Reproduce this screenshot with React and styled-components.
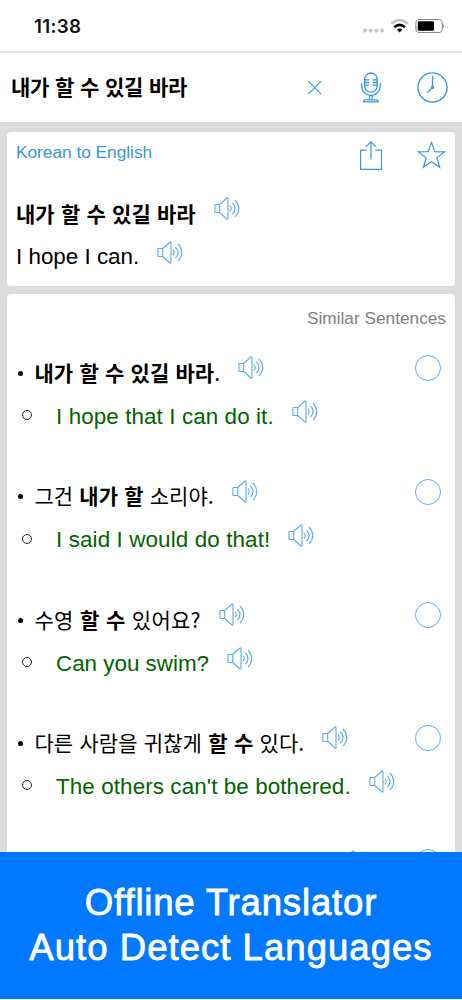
import React, { Component } from 'react';
import styled, { createGlobalStyle, ThemeProvider } from 'styled-components';

const theme = {
    accent: '#3498db',
    light: '#5dade2',
    green: '#006400',
    grey: '#dcdcdc',
    banner: '#0078ff',
};

const GlobalStyle = createGlobalStyle`
    * {
        box-sizing: border-box;
    }

    body {
        margin: 0;
        background: #fff;
        font-family: "Liberation Sans", "Noto Sans CJK KR", sans-serif;
    }

    svg {
        display: block;
        flex: none;
        fill: none;
    }
`;

const Screen = styled.div`
    display: flex;
    flex-direction: column;
    width: 462px;
    height: 1000px;
    overflow: hidden;
    background: #fff;
`;

const StatusBar = styled.div`
    display: flex;
    flex: none;
    align-items: center;
    justify-content: space-between;
    height: 53px;
    padding: 0 18px 0 34px;
    border-bottom: 2px solid #e6e6e6;
`;

const Time = styled.span`
    padding-top: 1px;
    font: 600 18.8px Inter, sans-serif;
    letter-spacing: 0.3px;
    color: #111;
`;

const SearchBar = styled.div`
    display: flex;
    flex: none;
    align-items: center;
    justify-content: space-between;
    height: 69px;
    padding: 0 14px 0 11px;
`;

const Query = styled.div`
    padding-bottom: 3px;
`;

const Tools = styled.div`
    display: flex;
    align-items: center;
    gap: 34px;
    color: ${({ theme }) => theme.accent};
`;

const Korean = styled.span`
    font-family: "Noto Sans CJK KR", sans-serif;
    font-size: 21px;
    font-weight: ${({ bold }) => (bold ? 700 : 400)};
    line-height: 30px;
    letter-spacing: ${({ spacing }) => spacing || 0}px;
    word-spacing: 1.5px;
    white-space: pre;
    color: #000;

    b {
        font-weight: 700;
    }
`;

const English = styled.span`
    margin-top: ${({ green }) => (green ? 2 : 0)}px;
    font-size: 22.4px;
    line-height: 30px;
    letter-spacing: ${({ spacing }) => spacing || 0}px;
    white-space: pre;
    color: ${({ green, theme }) => (green ? theme.green : '#000')};
`;

const Content = styled.main`
    display: flex;
    flex: none;
    flex-direction: column;
    gap: 8px;
    height: 730px;
    padding: 10px 7px 0 7px;
    overflow: hidden;
    background: ${({ theme }) => theme.grey};
`;

const Card = styled.section`
    flex: none;
    height: ${({ height }) => height}px;
    padding: 9px 9px 0;
    border-radius: 4px;
    background: #fff;
`;

const CardHeader = styled.div`
    display: flex;
    align-items: flex-start;
    justify-content: space-between;
    height: 49.5px;
`;

const Direction = styled.span`
    font-size: 17.25px;
    line-height: 22px;
    color: ${({ theme }) => theme.accent};
`;

const CardTools = styled.div`
    display: flex;
    gap: 34px;
    color: ${({ theme }) => theme.accent};
`;

const Line = styled.div`
    display: flex;
    align-items: center;
    height: 44px;
`;

const SimilarTitle = styled.h2`
    margin: 0 0 16.8px;
    font-size: 17.25px;
    font-weight: 400;
    line-height: 30px;
    text-align: right;
    color: #808080;
`;

const Pair = styled.div`
    height: 123.4px;
`;

const Bullet = styled.span`
    flex: none;
    width: ${({ hollow }) => (hollow ? 10 : 5)}px;
    height: ${({ hollow }) => (hollow ? 10 : 5)}px;
    margin: ${({ hollow }) => (hollow ? '0 24px 1px 6px' : '3px 12px 0 1.5px')};
    border: ${({ hollow }) => (hollow ? '1px solid #222' : 'none')};
    border-radius: 50%;
    background: ${({ hollow }) => (hollow ? 'none' : '#000')};
`;

const Picker = styled.span`
    width: 26px;
    height: 26px;
    margin: 0 5px 7px auto;
    border: 1.3px solid ${({ theme }) => theme.light};
    border-radius: 50%;
`;

const SpeakerBox = styled.span`
    margin: 0 0 8px ${({ offset }) => offset}px;
    color: ${({ theme }) => theme.light};
`;

const Banner = styled.footer`
    flex: none;
    height: 147px;
    padding-top: 28px;
    background: ${({ theme }) => theme.banner};
    color: #fff;
    text-align: center;
`;

const BannerLine = styled.div`
    font-size: 36.6px;
    line-height: 45px;
    letter-spacing: ${({ spacing }) => spacing}px;
    -webkit-text-stroke: 0.8px #fff;
    font-variant-ligatures: none;
    white-space: nowrap;
`;

const StatusIcons = () => (
    <svg width="82" height="18" viewBox="362 17 82 18">
        <g fill="#c8c8c8">
            <circle cx="365" cy="30.6" r="2.1" />
            <circle cx="370.7" cy="30.6" r="2.1" />
            <circle cx="376.4" cy="30.6" r="2.1" />
            <circle cx="382.1" cy="30.6" r="2.1" />
        </g>
        <path d="M391.2 23.8Q399.6 16.4 408 23.8" stroke="#c8c8c8" strokeWidth="2.5" />
        <path d="M394.3 27.2Q399.6 22.4 404.9 27.2" stroke="#000" strokeWidth="2.6" />
        <path d="M396.8 29.6Q399.6 27.4 402.4 29.6L399.6 32.6z" fill="#000" />
        <rect x="415.9" y="19.5" width="26.4" height="13" rx="3.6" stroke="#888" strokeWidth="1.1" />
        <rect x="417.8" y="21.2" width="16.2" height="9.6" rx="1.4" fill="#000" />
        <path d="M443.2 23.8q1.6 2.1 0 4.6z" fill="#777" />
    </svg>
);

const CloseIcon = () => (
    <svg width="20" height="20" viewBox="0 0 20 20" stroke="currentColor" strokeWidth="1.1">
        <path d="M3.2 3.1l13 13M16.2 3.1l-13 13" />
    </svg>
);

const MicIcon = () => (
    <svg width="24" height="31" viewBox="0 0 24 31" stroke="currentColor" strokeWidth="1.3">
        <rect x="5.6" y="1" width="12.6" height="19.2" rx="6.3" />
        <path d="M5.6 7.9h4.6M5.6 10.5h4.6M5.6 13.1h4.6M13.6 7.9h4.6M13.6 10.5h4.6M13.6 13.1h4.6" />
        <path d="M2.6 11.2v3a9.3 9.3 0 0 0 18.6 0v-3" />
        <path d="M10.6 23.6v4M13.2 23.6v4" />
        <path d="M4.6 29.8q0-2 2-2h10.6q2 0 2 2z" />
    </svg>
);

const ClockIcon = () => (
    <svg width="31" height="31" viewBox="0 0 31 31" stroke="currentColor" strokeWidth="1.3">
        <circle cx="15.5" cy="15.5" r="14.6" />
        <path d="M15.5 3.7v11.8l-5 5" />
        <circle cx="15.5" cy="15.5" r="1.7" fill="currentColor" stroke="none" />
    </svg>
);

const ShareIcon = () => (
    <svg width="24" height="30" viewBox="0 0 24 30" stroke="currentColor" strokeWidth="1.2">
        <path d="M7.6 9.2H1.6v19.2h20.9V9.2h-6" />
        <path d="M12 18.5V.9M7 5.9l5-5 5 5" />
    </svg>
);

const StarIcon = () => (
    <svg width="29" height="28" viewBox="0 0 29 28" stroke="currentColor" strokeWidth="1.2">
        <path d="M14.5 1.4l3.3 9.2 9.9.2-7.8 6.1 2.8 9.4-8.2-5.5-8.2 5.5 2.8-9.4-7.8-6.1 9.9-.2z" />
    </svg>
);

const Speaker = ({ offset }) => (
    <SpeakerBox offset={offset}>
        <svg width="27" height="23" viewBox="0 0 27 23" stroke="currentColor" strokeWidth="1.1">
            <path d="M5.7 7.5H1.5q-.6 0-.6.6v6.8q0 .6.6.6h4.2zL13 1q1-.6 1 .6v19.8q0 1.2-1 .6l-7.3-6.5" />
            <path d="M15.8 8.6q2.9 2.9 0 5.8M18.4 5.8q5.2 5.7 0 11.4M21 2.8q7.6 8.7 0 17.4" />
        </svg>
    </SpeakerBox>
);

const sentences = [
    {
        id: 1,
        korean: <><b>내가 할 수 있길 바라</b>.</>,
        english: 'I hope that I can do it.',
        spacing: 0.1,
    },
    {
        id: 2,
        korean: <>그건 <b>내가 할</b> 소리야.</>,
        english: 'I said I would do that!',
        spacing: 0.12,
    },
    {
        id: 3,
        korean: <>수영 <b>할 수</b> 있어요?</>,
        koreanSpacing: 0.2,
        english: 'Can you swim?',
    },
    {
        id: 4,
        korean: <>다른 사람을 귀찮게 <b>할 수</b> 있다.</>,
        koreanSpacing: 0.05,
        english: "The others can't be bothered.",
        spacing: 0.1,
    },
];

class App extends Component {
    renderSentence = ({ id, korean, koreanSpacing, english, spacing }) => (
        <Pair key={id}>
            <Line>
                <Bullet />
                <Korean spacing={koreanSpacing}>{korean}</Korean>
                <Speaker offset={18} />
                <Picker />
            </Line>
            <Line>
                <Bullet hollow />
                <English green spacing={spacing}>{english}</English>
                <Speaker offset={18} />
            </Line>
        </Pair>
    )

    render() {
        return (
            <ThemeProvider theme={theme}>
                <GlobalStyle />
                <Screen>
                    <StatusBar>
                        <Time>11:38</Time>
                        <StatusIcons />
                    </StatusBar>
                    <SearchBar>
                        <Query>
                            <Korean bold spacing={-0.3}>내가 할 수 있길 바라</Korean>
                        </Query>
                        <Tools>
                            <CloseIcon />
                            <MicIcon />
                            <ClockIcon />
                        </Tools>
                    </SearchBar>
                    <Content>
                        <Card height={154}>
                            <CardHeader>
                                <Direction>Korean to English</Direction>
                                <CardTools>
                                    <ShareIcon />
                                    <StarIcon />
                                </CardTools>
                            </CardHeader>
                            <Line>
                                <Korean bold>내가 할 수 있길 바라</Korean>
                                <Speaker offset={18} />
                            </Line>
                            <Line>
                                <English>I hope I can.</English>
                                <Speaker offset={18} />
                            </Line>
                        </Card>
                        <Card height={620}>
                            <SimilarTitle>Similar Sentences</SimilarTitle>
                            {sentences.map(this.renderSentence)}
                            <Line>
                                <Speaker offset={324} />
                                <Picker />
                            </Line>
                        </Card>
                    </Content>
                    <Banner>
                        <BannerLine spacing={0.8}>Offline Translator</BannerLine>
                        <BannerLine spacing={1}>Auto Detect Languages</BannerLine>
                    </Banner>
                </Screen>
            </ThemeProvider>
        );
    }
}

export default App;
